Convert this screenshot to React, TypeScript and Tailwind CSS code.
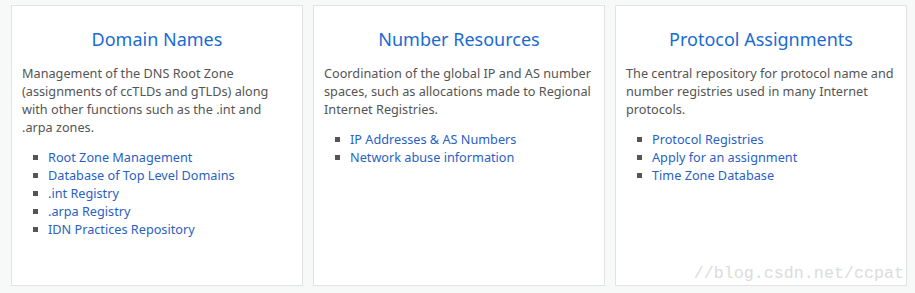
const cards = [
	{
		title: "Domain Names",
		text: "Management of the DNS Root Zone (assignments of ccTLDs and gTLDs) along with other functions such as the .int and .arpa zones.",
		links: [
			"Root Zone Management",
			"Database of Top Level Domains",
			".int Registry",
			".arpa Registry",
			"IDN Practices Repository",
		],
	},
	{
		title: "Number Resources",
		text: "Coordination of the global IP and AS number spaces, such as allocations made to Regional Internet Registries.",
		links: ["IP Addresses & AS Numbers", "Network abuse information"],
	},
	{
		title: "Protocol Assignments",
		text: "The central repository for protocol name and number registries used in many Internet protocols.",
		links: [
			"Protocol Registries",
			"Apply for an assignment",
			"Time Zone Database",
		],
	},
];

export default function App() {
	return (
		<div className="relative h-[293px] w-[915px] bg-[#f7f8f8] pt-[5px] pl-[11px] font-['Noto_Sans',sans-serif]">
			<div className="flex gap-[10px]">
				{cards.map((card) => (
					<div
						key={card.title}
						className="h-[281px] w-[292px] border border-[#e2e3e3] bg-white px-[10px] pt-[21px]"
					>
						<h2 className="text-center text-[18px] leading-[24px] text-[#1a6bd1]">
							{card.title}
						</h2>
						<p className="mt-[13px] text-[12.7px] leading-[18px] text-[#555]">
							{card.text}
						</p>
						<ul className="mt-[12px] pl-[11px]">
							{card.links.map((link) => (
								<li
									key={link}
									className="flex items-center text-[12.7px] leading-[18px]"
								>
									<span className="mr-[10px] h-[5px] w-[5px] bg-[#555]" />
									<a href="#" className="text-[#2a5fc4]">
										{link}
									</a>
								</li>
							))}
						</ul>
					</div>
				))}
			</div>
			<div className="absolute right-[11px] bottom-[9px] font-['Liberation_Mono',monospace] text-[16.7px] leading-[20px] text-[#dcdcdc]">
				//blog.csdn.net/ccpat
			</div>
		</div>
	);
}
